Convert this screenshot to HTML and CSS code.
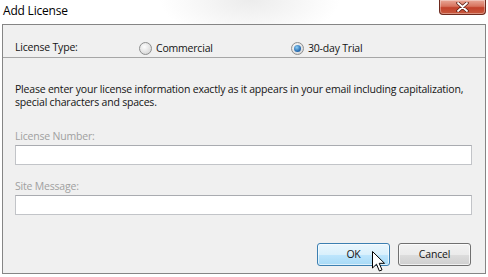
FILE: index.html
```html
<!DOCTYPE html>
<html lang="en">
<head>
  <meta charset="UTF-8">
  <title>Add License</title>
  <link rel="stylesheet" href="styles.css">
</head>
<body>

  <div class="window">
    <!-- Title bar -->
    <div class="titlebar">
      <span class="title">Add License</span>
      <button class="close-btn" aria-label="Close">
        <svg width="13" height="10" viewBox="0 0 13 10">
          <path d="M2 1 L11 9 M11 1 L2 9" stroke="#5a1e14" stroke-width="3.4" stroke-linecap="round"/>
          <path d="M2 1 L11 9 M11 1 L2 9" stroke="#fff" stroke-width="1.8" stroke-linecap="round"/>
        </svg>
      </button>
    </div>

    <div class="panel">
      <!-- License type -->
      <div class="type-row">
        <span class="type-label">License Type:</span>
        <label class="radio radio-first"><span class="dot"></span>Commercial</label>
        <label class="radio checked"><span class="dot"></span>30-day Trial</label>
      </div>

      <div class="form-body">
        <p class="info">Please enter your license information exactly as it appears in your email including capitalization,<br>special characters and spaces.</p>

        <label class="field-label first">License Number:</label>
        <input type="text" class="field">

        <label class="field-label">Site Message:</label>
        <input type="text" class="field">

        <div class="buttons">
          <div class="btn-wrap">
            <button class="btn btn-ok">OK</button>
            <svg class="cursor" width="14" height="22" viewBox="0 0 14 22">
              <path d="M0.5 0.5 L0.5 17 L4.5 13.2 L7.4 20 L10 18.9 L7.2 12.3 L12.5 12.3 Z" fill="#fff" stroke="#000" stroke-width="1" stroke-linejoin="miter"/>
            </svg>
          </div>
          <button class="btn btn-cancel">Cancel</button>
        </div>
      </div>
    </div>
  </div>

</body>
</html>
```

FILE: styles.css
```css
/* Base */
* { margin: 0; padding: 0; box-sizing: border-box; }
html, body { width: 100%; height: 100%; background: #fff; }
body { font-family: "Open Sans", "Noto Sans", sans-serif; font-size: 10.5px; letter-spacing: -0.2px; line-height: 13px; color: #141414; }

.window { width: 488px; height: 277px; display: flex; flex-direction: column; background: radial-gradient(ellipse 90px 40px at 250px 0, #ececec, #fff); }

/* Title bar */
.titlebar { height: 24px; display: flex; justify-content: space-between; align-items: flex-start; padding: 0 2px 0 3px; }
.title { padding-top: 4px; color: #000; font-size: 12px; letter-spacing: -0.2px; }
.close-btn {
  width: 47px; height: 15px;
  display: flex; align-items: center; justify-content: center;
  border: 1px solid #6d2a1e; border-top: none;
  border-radius: 0 0 4px 4px;
  background: linear-gradient(#e9a898 0%, #d7735e 45%, #c2412b 55%, #c85a3f 100%);
  box-shadow: inset 0 0 0 1px rgba(255,255,255,0.35);
}

/* Panel */
.panel { margin: 0 2px; height: 250px; border: 1px solid #858585; background: #f0f0f0; display: flex; flex-direction: column; }

.type-row { height: 33px; padding: 16px 12px 0; border-bottom: 1px solid #a6a6a6; display: flex; align-items: flex-start; }
.type-label { width: 124px; }
.radio { display: flex; align-items: center; gap: 3px; }
.radio-first { width: 152px; }
.dot {
  width: 13px; height: 13px; margin-top: 1px; margin-right: 1px;
  border-radius: 50%; border: 1px solid #8e8f8f;
  background: radial-gradient(circle at 40% 35%, #fdfdfd, #dcdcdc 70%, #c9c9c9);
  position: relative;
}
.checked .dot::after {
  content: ""; position: absolute; left: 2px; top: 2px; width: 7px; height: 7px; border-radius: 50%;
  background: radial-gradient(circle at 40% 35%, #8fd0f5, #2a6fb4 60%, #164f8c);
}

/* Form */
.form-body { flex: 1; padding: 25px 13px 7px 12px; display: flex; flex-direction: column; }
.field-label { color: #a0a0a0; margin-top: 15px; }
.field-label.first { margin-top: 21px; }
.field { height: 20px; margin-top: 2px; width: 100%; border: 1px solid #c2c4c8; border-top-color: #a9abb0; background: #fff; }

.buttons { margin-top: auto; display: flex; justify-content: flex-end; gap: 8px; padding-right: 1px; }
.btn-wrap { position: relative; }
.btn { width: 73px; height: 23px; border-radius: 3px; font: inherit; letter-spacing: inherit; color: #141414; }
.btn-ok { border: 1px solid #3c7fb1; background: linear-gradient(#eaf6fd 0%, #d9f0fc 50%, #bee6fd 51%, #a7d9f5 100%); box-shadow: inset 0 0 0 1px rgba(255,255,255,0.6); }
.btn-cancel { border: 1px solid #707070; background: linear-gradient(#f2f2f2 0%, #ebebeb 50%, #dddddd 51%, #cfcfcf 100%); box-shadow: inset 0 0 0 1px rgba(255,255,255,0.7); }
.cursor { position: absolute; left: 55px; top: 8px; }
```
